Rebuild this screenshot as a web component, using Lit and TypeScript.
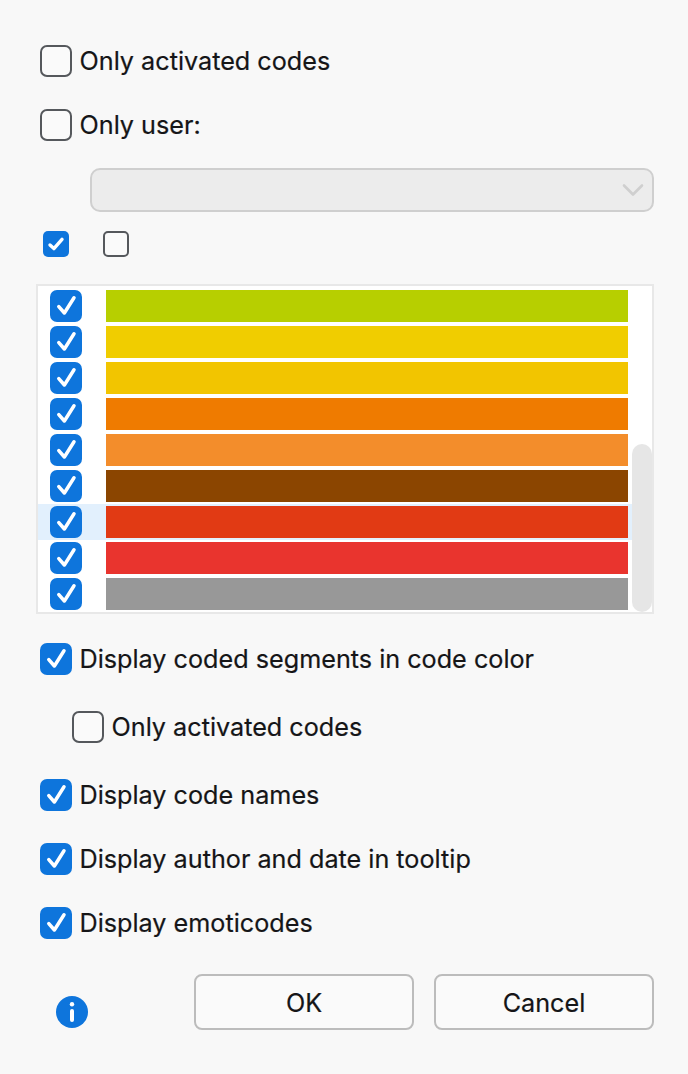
import { LitElement, html, css, svg } from "lit";
import { customElement } from "lit/decorators.js";

const SWATCHES = ["#b7cf00", "#f0cd00", "#f2c500", "#ef7b00", "#f38d2b", "#8b4500", "#e13a14", "#e9342e", "#989898"];

const bigCheck = html`<svg class="mark" viewBox="0 0 32 32"><path d="M8.8 16.6L14.4 23L24 7.8" fill="none" stroke="#fff" stroke-width="3.5" stroke-linecap="round" stroke-linejoin="round"/></svg>`;
const smallCheck = html`<svg class="mark" viewBox="0 0 26 26"><path d="M7 14l3.9 3.6L19 8.4" fill="none" stroke="#fff" stroke-width="3.4" stroke-linecap="round" stroke-linejoin="round"/></svg>`;

@customElement("app-root")
export class AppRoot extends LitElement {
  static styles = css`
    :host {
      display: block;
      width: 688px;
      height: 1074px;
      box-sizing: border-box;
      padding: 45px 34px 0 40px;
      background: #f8f8f8;
      color: #151517;
      font-family: Inter, "Liberation Sans", sans-serif;
      font-size: 25.2px;
      -webkit-text-stroke: 0.2px #151517;
      overflow: hidden;
    }
    .opt {
      display: flex;
      align-items: center;
      gap: 7.5px;
      height: 32px;
      line-height: 32px;
      white-space: nowrap;
    }
    .gap-29 { margin-top: 29px; }
    .gap-32 { margin-top: 32px; }
    .gap-36 { margin-top: 36px; }
    .indent { margin-left: 32px; }
    .box {
      flex: none;
      width: 32px;
      height: 32px;
      box-sizing: border-box;
      border-radius: 7px;
      border: 2px solid #55585c;
      background: #fafafa;
    }
    .box.on { background: #0e75dc; border: none; }
    .box.small { width: 26px; height: 26px; border-radius: 5px; }
    .mark { display: block; width: 100%; height: 100%; }
    .select {
      box-sizing: border-box;
      margin: 27px 0 0 50px;
      height: 44px;
      border: 2px solid #cfcfcf;
      border-radius: 10px;
      background: #ececec;
      display: flex;
      align-items: center;
      justify-content: flex-end;
      padding-right: 8px;
    }
    .select svg { width: 22px; height: 14px; display: block; }
    .toggles {
      display: flex;
      gap: 34px;
      margin: 19px 0 0 3px;
    }
    .list {
      position: relative;
      box-sizing: border-box;
      margin: 27px 0 0 -4px;
      height: 330px;
      padding-top: 2px;
      border: 2px solid #e8e8e8;
      background: #fff;
      overflow: hidden;
    }
    .row {
      height: 36px;
      box-sizing: border-box;
      margin-right: 20px;
      padding: 2px 4px 2px 12px;
      display: flex;
      align-items: center;
      gap: 24px;
    }
    .row.hl { background: #e2f0fd; }
    .swatch { flex: 1; height: 32px; }
    .thumb {
      position: absolute;
      right: 0;
      bottom: 0;
      width: 20px;
      height: 168px;
      border-radius: 10px;
      background: #e6e6e6;
    }
    .actions {
      display: flex;
      align-items: flex-end;
      gap: 20px;
      margin-top: 35px;
    }
    .info { width: 32px; height: 32px; margin: 0 86px 2px 16px; flex: none; display: block; }
    button {
      flex: none;
      width: 220px;
      height: 56px;
      box-sizing: border-box;
      border: 2px solid #bcbcbc;
      border-radius: 8px;
      background: #fafafa;
      color: #151517;
      font: inherit;
      padding: 2px 0 0;
    }
  `;

  private opt(label: string, on: boolean, cls = "") {
    return html`<div class="opt ${cls}">
      <span class="box ${on ? "on" : ""}">${on ? bigCheck : ""}</span><span>${label}</span>
    </div>`;
  }

  render() {
    return html`
      ${this.opt("Only activated codes", false)}
      ${this.opt("Only user:", false, "gap-32")}
      <div class="select">
        <svg viewBox="0 0 22 14"><path d="M2 2.5l9 9 9-9" fill="none" stroke="#cfcfcf" stroke-width="2.6" stroke-linecap="round" stroke-linejoin="round"/></svg>
      </div>
      <div class="toggles">
        <span class="box small on">${smallCheck}</span>
        <span class="box small"></span>
      </div>
      <div class="list">
        ${SWATCHES.map(
          (c, i) => html`<div class="row ${i === 6 ? "hl" : ""}">
            <span class="box on">${bigCheck}</span>
            <span class="swatch" style="background:${c}"></span>
          </div>`
        )}
        <div class="thumb"></div>
      </div>
      ${this.opt("Display coded segments in code color", true, "gap-29")}
      ${this.opt("Only activated codes", false, "gap-36 indent")}
      ${this.opt("Display code names", true, "gap-36")}
      ${this.opt("Display author and date in tooltip", true, "gap-32")}
      ${this.opt("Display emoticodes", true, "gap-32")}
      <div class="actions">
        <svg class="info" viewBox="0 0 32 32">
          ${svg`<circle cx="16" cy="16" r="16" fill="#0e75dc"/><circle cx="16" cy="8.2" r="2.2" fill="#fff"/><rect x="14" y="13" width="4" height="13" rx="2" fill="#fff"/>`}
        </svg>
        <button>OK</button>
        <button>Cancel</button>
      </div>
    `;
  }
}
